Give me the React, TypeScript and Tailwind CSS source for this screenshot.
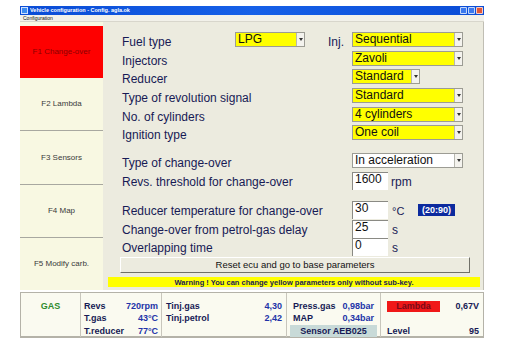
import React from 'react'

const FONT = "font-['Liberation_Sans',Arial,sans-serif]"

function Arrow() {
  return (
    <div className="flex h-full w-[8px] items-center justify-center border-l border-[#b8b8b0] bg-[#f4f3ee]">
      <svg width="4" height="3" viewBox="0 0 4 3">
        <path d="M0 0 L4 0 L2 3 Z" fill="#333" />
      </svg>
    </div>
  )
}

function Select({ value, width, white }: { value: string; width: string; white?: boolean }) {
  return (
    <div
      className={`flex h-[15px] items-stretch border border-[#9c9c94] ${width} ${
        white ? 'bg-white' : 'bg-[#ffff00]'
      }`}
    >
      <span className="flex-1 pl-[2px] text-[12px] leading-[13px] text-[#111]">{value}</span>
      <Arrow />
    </div>
  )
}

function NumInput({ value }: { value: string }) {
  return (
    <div className="h-[18px] w-[36px] border-l border-t border-[#8a8a84] border-b-[#f4f4f0] border-r-[#f4f4f0] bg-white pl-[2px] text-[12px] leading-[13px] text-[#111]">
      {value}
    </div>
  )
}

function Label({ text, width = 'w-[230px]' }: { text: string; width?: string }) {
  return <span className={`${width} mt-[3px] text-[12px] leading-[15px] text-[#171a55]`}>{text}</span>
}

function SideItem({ text, active, last }: { text: string; active?: boolean; last?: boolean }) {
  return (
    <div
      className={`flex flex-1 items-center justify-center text-[8px] ${
        active ? 'bg-[#fe0000] text-[#8a0000]' : 'text-[#3a3a3a]'
      } ${!active && !last ? 'border-b border-[#a8a8a0]' : ''}`}
    >
      {text}
    </div>
  )
}

export default function App() {
  const selectRows = [
    { label: 'Injectors', value: 'Zavoli', width: 'w-[111px]' },
    { label: 'Reducer', value: 'Standard', width: 'w-[68px]' },
    { label: 'Type of revolution signal', value: 'Standard', width: 'w-[111px]' },
    { label: 'No. of cylinders', value: '4 cylinders', width: 'w-[111px]' },
    { label: 'Ignition type', value: 'One coil', width: 'w-[111px]' },
  ]

  return (
    <div className={`relative h-[350px] w-[506px] overflow-hidden bg-white ${FONT}`}>
      <div className="ml-[20px] mt-[6px] w-[464px]">
        {/* Title bar */}
        <div className="flex h-[9px] items-center bg-gradient-to-r from-[#0a4cd6] via-[#1660e8] to-[#0a4cd6] px-[1px]">
          <div className="mr-[2px] h-[7px] w-[7px] border border-[#cfe0ff] bg-[#3c8cf0]" />
          <span className="text-[5.5px] font-bold leading-none text-white">
            Vehicle configuration - Config. agla.ok
          </span>
          <div className="ml-auto flex gap-[1px]">
            <div className="h-[7px] w-[7px] rounded-[1px] border border-white/70 bg-[#3b79ee]" />
            <div className="h-[7px] w-[7px] rounded-[1px] border border-white/70 bg-[#3b79ee]" />
            <div className="h-[7px] w-[7px] rounded-[1px] border border-white/70 bg-[#e0583a]" />
          </div>
        </div>
        {/* Menu */}
        <div className="flex h-[7px] items-center border-b border-[#d8d6cc] bg-[#f2f1ea] pl-[3px] text-[5px] leading-none text-[#111]">
          Configuration
        </div>
        {/* Body */}
        <div className="flex h-[268px] border-r border-[#c0beb4] bg-[#ecebdf]">
          <div className="flex w-[83px] flex-col bg-[#f8f8e2] pt-[4px]">
            <SideItem text="F1 Change-over" active />
            <SideItem text="F2 Lambda" />
            <SideItem text="F3 Sensors" />
            <SideItem text="F4 Map" />
            <SideItem text="F5 Modify carb." last />
          </div>
          <div className="flex flex-1 flex-col pt-[10px]">
            <div className="flex flex-col pl-[19px]">
              <div className="flex h-[18.7px] items-start">
                <Label text="Fuel type" width="w-[113px]" />
                <Select value="LPG" width="w-[70px]" />
                <span className="ml-[23px] mt-[3px] w-[24px] text-[12px] leading-[15px] text-[#171a55]">Inj.</span>
                <Select value="Sequential" width="w-[111px]" />
              </div>
              {selectRows.map((r) => (
                <div key={r.label} className="flex h-[18.7px] items-start">
                  <Label text={r.label} />
                  <Select value={r.value} width={r.width} />
                </div>
              ))}
              <div className="mt-[9px] flex h-[19px] items-start">
                <Label text="Type of change-over" />
                <Select value="In acceleration" width="w-[111px]" white />
              </div>
              <div className="flex h-[29px] items-start">
                <Label text="Revs. threshold for change-over" />
                <NumInput value="1600" />
                <span className="ml-[3px] mt-[3px] text-[12px] leading-[15px] text-[#171a55]">rpm</span>
              </div>
              <div className="flex h-[18.6px] items-start">
                <Label text="Reducer temperature for change-over" />
                <NumInput value="30" />
                <span className="ml-[4px] mt-[3px] w-[26px] text-[11px] leading-[15px] text-[#171a55]">°C</span>
                <span className="mt-[3px] bg-[#0c2a9e] px-[4px] text-[9px] font-bold leading-[12px] text-white">(20:90)</span>
              </div>
              <div className="flex h-[18.6px] items-start">
                <Label text="Change-over from petrol-gas delay" />
                <NumInput value="25" />
                <span className="ml-[4px] mt-[3px] text-[12px] leading-[15px] text-[#171a55]">s</span>
              </div>
              <div className="flex h-[18px] items-start">
                <Label text="Overlapping time" />
                <NumInput value="0" />
                <span className="ml-[4px] mt-[3px] text-[12px] leading-[15px] text-[#171a55]">s</span>
              </div>
            </div>
            <div className="ml-[17px] mt-[1px] flex h-[16px] w-[350px] items-center justify-center border border-b-[#707068] border-l-white border-r-[#707068] border-t-white bg-[#ecebdf] text-[9.5px] text-[#111]">
              Reset ecu and go to base parameters
            </div>
            <div className="ml-[5px] mt-[4px] flex h-[10px] w-[372px] items-center justify-center bg-[#ffff00] text-[7.5px] font-bold leading-none text-[#171a55]">
              Warning ! You can change yellow parameters only without sub-key.
            </div>
          </div>
        </div>
      </div>
      {/* Status bar */}
      <div className="ml-[20px] mt-[2px] grid h-[46px] w-[464px] grid-cols-[60px_81px_125px_94px_1fr] border border-b-2 border-[#b4b2a8] bg-[#fafaf0] text-[9px] font-bold leading-[12.3px] text-[#171a55]">
        <div className="border-r border-[#c8c6bc] pt-[7px] text-center text-[#2e8b2e]">GAS</div>
        <div className="border-r border-[#c8c6bc] px-[3px] pt-[7px]">
          <div className="flex justify-between"><span>Revs</span><span className="text-[#2233a8]">720rpm</span></div>
          <div className="flex justify-between"><span>T.gas</span><span className="text-[#2233a8]">43°C</span></div>
          <div className="flex justify-between"><span>T.reducer</span><span className="text-[#2233a8]">77°C</span></div>
        </div>
        <div className="border-r border-[#c8c6bc] px-[4px] pt-[7px]">
          <div className="flex justify-between"><span>Tinj.gas</span><span className="text-[#2233a8]">4,30</span></div>
          <div className="flex justify-between"><span>Tinj.petrol</span><span className="text-[#2233a8]">2,42</span></div>
        </div>
        <div className="border-r border-[#c8c6bc] px-[3px] pt-[7px]">
          <div className="flex justify-between px-[3px]"><span>Press.gas</span><span className="text-[#2233a8]">0,98bar</span></div>
          <div className="flex justify-between px-[3px]"><span>MAP</span><span className="text-[#2233a8]">0,34bar</span></div>
          <div className="bg-[#c8dad8] text-center">Sensor AEB025</div>
        </div>
        <div className="px-[4px] pt-[7px]">
          <div className="flex h-[12.3px] items-center justify-between">
            <span className="ml-[2px] flex h-[11px] w-[53px] items-center justify-center bg-[#f01818] text-[#7a0a18]">Lambda</span>
            <span>0,67V</span>
          </div>
          <div className="h-[12.3px]" />
          <div className="flex justify-between pl-[2px]"><span>Level</span><span>95</span></div>
        </div>
      </div>
    </div>
  )
}
